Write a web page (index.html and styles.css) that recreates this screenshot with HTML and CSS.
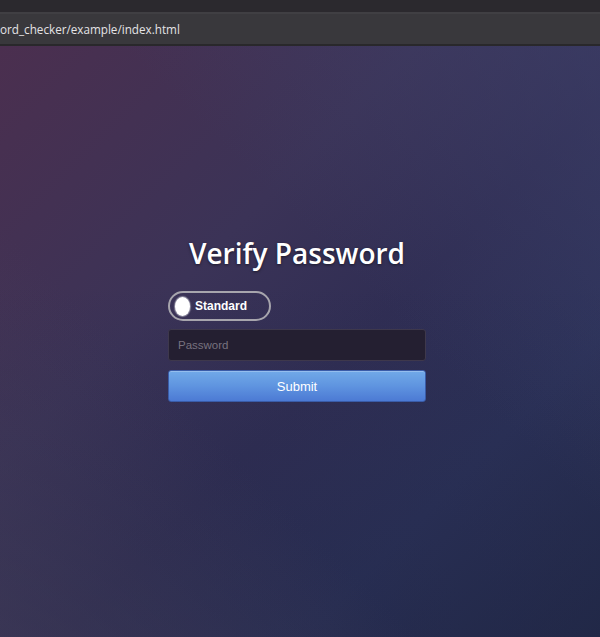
FILE: index.html
```html
<!DOCTYPE html>
<html lang="en">
<head>
<meta charset="utf-8">
<title>Verify Password</title>
<link rel="stylesheet" href="styles.css">
</head>
<body>
<div class="chrome">
  <div class="tabstrip"></div>
  <div class="urlbar"><span class="url">ord_checker/example/index.html</span></div>
</div>
<main class="page">
  <form class="form" onsubmit="return false">
    <h1 class="title">Verify Password</h1>
    <label class="toggle">
      <span class="knob"></span>
      <span class="toggle-label">Standard</span>
    </label>
    <input class="field" type="password" placeholder="Password">
    <button class="submit" type="submit">Submit</button>
  </form>
</main>
</body>
</html>
```
FILE: styles.css
```css
html, body {
  margin: 0;
  height: 100%;
}
body {
  display: flex;
  flex-direction: column;
  background: #2b292e;
  font-family: "Liberation Sans", Arial, sans-serif;
}
.chrome {
  flex: none;
}
.tabstrip {
  height: 12px;
  background: #2b292e;
  border-bottom: 2px solid #403f43;
}
.urlbar {
  height: 30px;
  background: #39383c;
  border-bottom: 2px solid #29282b;
  display: flex;
  align-items: center;
}
.url {
  font-family: "Open Sans", "Noto Sans", sans-serif;
  font-size: 11.7px;
  color: #e4e3e6;
  white-space: nowrap;
}
.page {
  flex: 1;
  padding: 189px 6px 0 0;
  background:
    linear-gradient(to bottom, rgba(36, 40, 70, 0) 0%, rgba(36, 40, 70, 0) 40%, rgba(30, 36, 66, 0.35) 100%),
    linear-gradient(135deg, #4b2f4f 0%, #3b3357 35%, #302e54 55%, #2b3158 75%, #232a4a 100%);
  position: relative;
}
.page::before {
  content: "";
  position: absolute;
  inset: 0;
  background: linear-gradient(to top right, rgba(74, 66, 92, 0.45) 0%, rgba(74, 66, 92, 0) 35%),
              linear-gradient(to bottom left, rgba(64, 68, 110, 0.5) 0%, rgba(64, 68, 110, 0) 40%);
  pointer-events: none;
}
.form {
  position: relative;
  width: 258px;
  margin: 0 auto;
  display: flex;
  flex-direction: column;
  align-items: flex-start;
}
.title {
  align-self: stretch;
  margin: 0 0 20px;
  font-family: "Open Sans", "Noto Sans", sans-serif;
  font-weight: 600;
  font-size: 28px;
  line-height: 36px;
  text-align: center;
  color: #ffffff;
  text-shadow: 0 1px 3px rgba(0, 0, 0, 0.5);
}
.toggle {
  box-sizing: border-box;
  width: 103px;
  height: 30px;
  border: 2px solid #a7a5ad;
  border-radius: 15px;
  display: flex;
  align-items: center;
  padding-left: 5px;
  gap: 5px;
  cursor: pointer;
}
.knob {
  width: 15px;
  height: 19px;
  border-radius: 50%;
  background: #ffffff;
  box-shadow: 0 0 1px 1px rgba(200, 200, 210, 0.6);
}
.toggle-label {
  font-weight: 700;
  font-size: 12px;
  color: #ffffff;
}
.field {
  box-sizing: border-box;
  margin: 8px 0 0;
  width: 258px;
  height: 32px;
  padding: 0 9px;
  background: #241f31;
  border: 1px solid #3e384c;
  border-radius: 3px;
  font-family: "Liberation Sans", Arial, sans-serif;
  font-size: 11.5px;
  color: #dddddd;
  outline: none;
}
.field::placeholder {
  color: #77727f;
}
.submit {
  box-sizing: border-box;
  margin: 9px 0 0;
  width: 258px;
  height: 32px;
  border: 1px solid #3a5ca8;
  border-radius: 3px;
  background: linear-gradient(to bottom, #71aae8 0%, #5f94e0 50%, #4c7ad4 100%);
  box-shadow: inset 0 1px 0 rgba(255, 255, 255, 0.25);
  font-family: "Liberation Sans", Arial, sans-serif;
  font-size: 13px;
  color: #ffffff;
  cursor: pointer;
}
```
